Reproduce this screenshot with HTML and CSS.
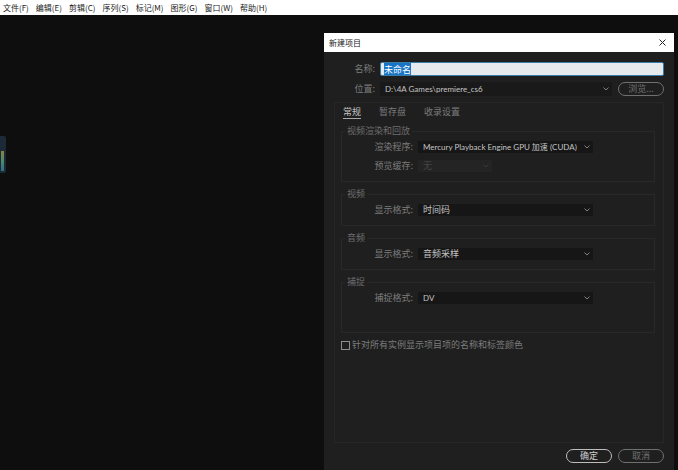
FILE: index.html
```html
<!DOCTYPE html>
<html lang="zh-CN">
<head>
    <meta charset="UTF-8">
    <meta name="viewport" content="width=device-width, initial-scale=1.0">
    <title>新建项目</title>
    <link rel="stylesheet" href="styles.css">
</head>
<body>
    <nav class="menubar">
        <a href="#">文件(F)</a>
        <a href="#">编辑(E)</a>
        <a href="#">剪辑(C)</a>
        <a href="#">序列(S)</a>
        <a href="#">标记(M)</a>
        <a href="#">图形(G)</a>
        <a href="#">窗口(W)</a>
        <a href="#">帮助(H)</a>
    </nav>
    <main class="workspace">
        <div class="meter"><div class="meter-level"></div></div>
        <form class="dialog" id="projectForm">
            <header class="titlebar">
                <h1>新建项目</h1>
                <button type="button" class="close" aria-label="关闭">
                    <svg width="7" height="7" viewBox="0 0 7 7"><path d="M0.5 0.5 L6.5 6.5 M6.5 0.5 L0.5 6.5"/></svg>
                </button>
            </header>
            <div class="content">
                <div class="row">
                    <label for="name">名称:</label>
                    <input type="text" id="name" class="name" value="未命名">
                </div>
                <div class="row">
                    <label for="location">位置:</label>
                    <div class="select location">
                        <select id="location" class="small"><option>D:\4A Games\premiere_cs6</option></select>
                        <svg width="6" height="4" viewBox="0 0 6 4"><path d="M0.5 0.5 L3 3 L5.5 0.5"/></svg>
                    </div>
                    <button type="button" class="pill">浏览...</button>
                </div>
                <section class="panel">
                    <div class="tabs">
                        <button type="button" class="tab active">常规</button>
                        <button type="button" class="tab">暂存盘</button>
                        <button type="button" class="tab">收录设置</button>
                    </div>
                    <fieldset class="tall">
                        <legend>视频渲染和回放</legend>
                        <div class="field">
                            <label for="renderer">渲染程序:</label>
                            <div class="select">
                                <select id="renderer" class="small"><option>Mercury Playback Engine GPU 加速 (CUDA)</option></select>
                                <svg width="6" height="4" viewBox="0 0 6 4"><path d="M0.5 0.5 L3 3 L5.5 0.5"/></svg>
                            </div>
                        </div>
                        <div class="field">
                            <label for="cache">预览缓存:</label>
                            <div class="select disabled">
                                <select id="cache" disabled><option>无</option></select>
                                <svg width="6" height="4" viewBox="0 0 6 4"><path d="M0.5 0.5 L3 3 L5.5 0.5"/></svg>
                            </div>
                        </div>
                    </fieldset>
                    <fieldset>
                        <legend>视频</legend>
                        <div class="field">
                            <label for="video">显示格式:</label>
                            <div class="select">
                                <select id="video"><option>时间码</option></select>
                                <svg width="6" height="4" viewBox="0 0 6 4"><path d="M0.5 0.5 L3 3 L5.5 0.5"/></svg>
                            </div>
                        </div>
                    </fieldset>
                    <fieldset>
                        <legend>音频</legend>
                        <div class="field">
                            <label for="audio">显示格式:</label>
                            <div class="select">
                                <select id="audio"><option>音频采样</option></select>
                                <svg width="6" height="4" viewBox="0 0 6 4"><path d="M0.5 0.5 L3 3 L5.5 0.5"/></svg>
                            </div>
                        </div>
                    </fieldset>
                    <fieldset class="tall">
                        <legend>捕捉</legend>
                        <div class="field">
                            <label for="capture">捕捉格式:</label>
                            <div class="select">
                                <select id="capture" class="small"><option>DV</option></select>
                                <svg width="6" height="4" viewBox="0 0 6 4"><path d="M0.5 0.5 L3 3 L5.5 0.5"/></svg>
                            </div>
                        </div>
                    </fieldset>
                    <div class="check">
                        <input type="checkbox" id="labels">
                        <label for="labels">针对所有实例显示项目项的名称和标签颜色</label>
                    </div>
                </section>
                <footer class="actions">
                    <button type="submit" class="pill primary">确定</button>
                    <button type="button" class="pill">取消</button>
                </footer>
            </div>
        </form>
    </main>
    <script>
        document.getElementById('name').select();

        document.getElementById('projectForm').addEventListener('submit', function (e) {
            e.preventDefault();
        });
    </script>
</body>
</html>
```
FILE: styles.css
```css
* {
    box-sizing: border-box;
}
body {
    margin: 0;
    min-height: 100vh;
    display: flex;
    flex-direction: column;
    background: #0e0e0e;
    color: #7c7c7c;
    font-family: "Noto Sans CJK SC", sans-serif;
    font-size: 9px;
    line-height: 12px;
}
button, input, select {
    margin: 0;
    padding: 0;
    border: none;
    background: none;
    color: inherit;
    font: inherit;
}
svg {
    fill: none;
    stroke: currentColor;
}
.menubar {
    display: flex;
    gap: 7px;
    padding: 2px 3px 1px;
    background: #fff;
    font-size: 8px;
}
.menubar a {
    color: #222;
    text-decoration: none;
}
.workspace {
    position: relative;
    flex: 1;
    display: flex;
    justify-content: flex-end;
    padding: 18px 4px 0 0;
}
.meter {
    position: absolute;
    left: 0;
    top: 121px;
    width: 6px;
    height: 37px;
    padding: 15px 2px 2px 1px;
    background: #1c2a38;
    border-radius: 0 2px 2px 0;
}
.meter-level {
    height: 100%;
    background: linear-gradient(#8a8443, #4c8a6a 50%, #2f6f86);
}
.dialog {
    width: 350px;
    display: flex;
    flex-direction: column;
    background: #1f1f1f;
}
.titlebar {
    display: flex;
    justify-content: space-between;
    align-items: center;
    height: 19px;
    padding: 0 8px 0 5px;
    background: #fff;
    color: #222;
}
h1 {
    margin: 0;
    font-size: 8px;
    font-weight: normal;
}
.close {
    display: flex;
}
.content {
    flex: 1;
    display: flex;
    flex-direction: column;
    gap: 6px;
    padding: 10px 10px 7px;
}
.row {
    display: flex;
    align-items: center;
}
.row label {
    width: 46px;
    padding-right: 5px;
    text-align: right;
}
.name {
    flex: 1;
    height: 14px;
    padding: 0 3px;
    border: 1px solid #3a7ca8;
    border-radius: 2px;
    outline: none;
    background: #e6eaec;
    color: #222;
}
.name::selection {
    background: #1874c4;
    color: #fff;
}
.select {
    display: flex;
    align-items: center;
    width: 175px;
    height: 12px;
    padding-right: 3px;
    background: #161616;
    color: #c4c4c4;
}
.select select {
    flex: 1;
    min-width: 0;
    height: 12px;
    padding-left: 5px;
    appearance: none;
    outline: none;
    font-family: Lato, "Noto Sans CJK SC", sans-serif;
}
.select .small {
    font-size: 8px;
}
.select svg {
    flex: none;
    color: #808080;
}
.location {
    flex: 1;
    height: 14px;
    margin-right: 6px;
    background: #191919;
}
.disabled {
    width: 74px;
    background: #242424;
    color: #444;
}
.disabled select {
    opacity: 1;
}
.disabled svg {
    color: #3a3a3a;
}
.pill {
    width: 46px;
    height: 14px;
    border: 1px solid #707070;
    border-radius: 7px;
    color: #707070;
    line-height: 12px;
}
.primary {
    border-color: #bdbdbd;
    color: #d0d0d0;
}
.panel {
    flex: 1;
    display: flex;
    flex-direction: column;
    gap: 6px;
    padding: 2px 8px 6px 6px;
    border: 1px solid #272727;
}
.tabs {
    display: flex;
    gap: 18px;
    padding-left: 2px;
}
.tab {
    height: 14px;
    border-bottom: 1px solid transparent;
    line-height: 12px;
}
.tab.active {
    border-color: #a8a8a8;
    color: #c4c4c4;
}
fieldset {
    display: flex;
    flex-direction: column;
    gap: 7px;
    min-width: 0;
    margin: 0;
    padding: 4px 0 9px;
    border: 1px solid #282828;
}
.tall {
    min-height: 57px;
}
legend {
    margin-left: 3px;
    padding: 0 2px;
    color: #6e6e6e;
}
.field {
    display: flex;
    align-items: center;
}
.field label {
    width: 76px;
    padding-right: 5px;
    text-align: right;
}
.check {
    display: flex;
    align-items: center;
    gap: 2px;
}
.check input {
    width: 9px;
    height: 9px;
    appearance: none;
    border: 1px solid #8c8c8c;
}
.actions {
    display: flex;
    justify-content: flex-end;
    gap: 6px;
}
```
